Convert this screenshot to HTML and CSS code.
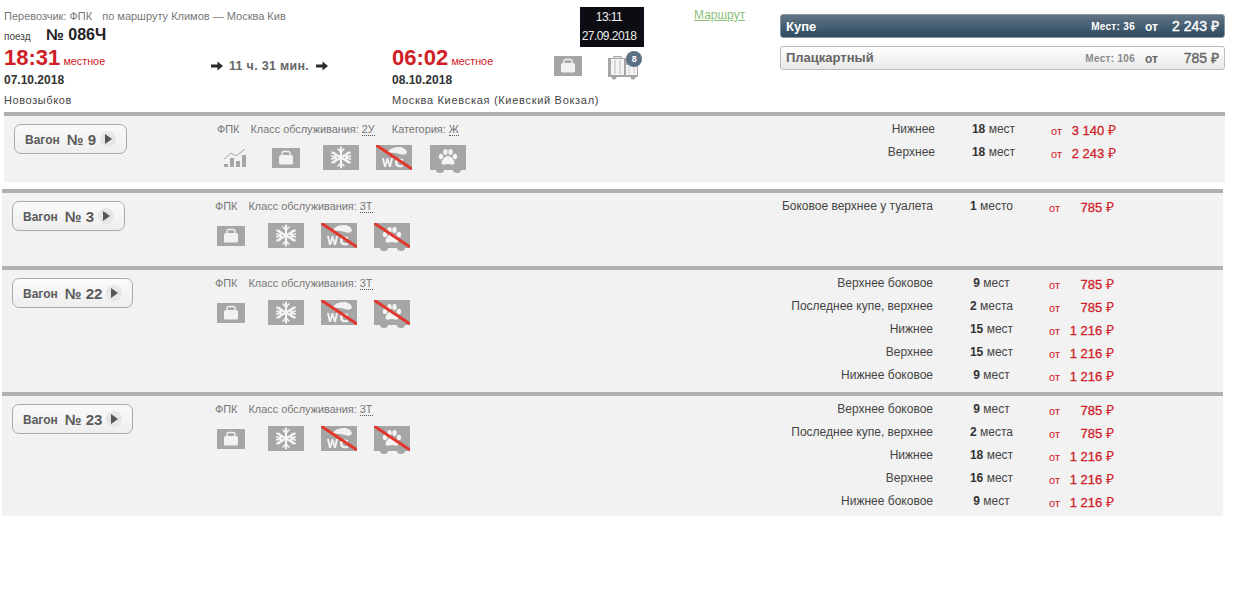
FILE: index.html
```html
<!DOCTYPE html>
<html lang="ru">
<head>
<meta charset="utf-8">
<title>Поезд № 086Ч</title>
<link rel="stylesheet" href="styles.css">
</head>
<body>
<svg class="defs" width="0" height="0" aria-hidden="true">
  <symbol id="bag" viewBox="0 0 28 20">
    <rect width="28" height="20" fill="#a6a6a6"/>
    <path d="M10 7.500V5.500Q10 3.500 12 3.500H16Q18 3.500 18 5.500V7.500" fill="none" stroke="#f2f2f2" stroke-width="1.400"/>
    <path d="M7 9Q7 7 9 7H19Q21 7 21 9V15Q21 16.500 19.500 16.500H8.500Q7 16.500 7 15Z" fill="#f2f2f2"/>
  </symbol>
  <symbol id="snow" viewBox="0 0 36 25">
    <rect width="36" height="25" fill="#a6a6a6"/>
    <g stroke="#f4f4f4" stroke-linecap="round" fill="none">
      <path d="M18 2.500V22.500M9.300 7.500L26.700 17.500M9.300 17.500L26.700 7.500" stroke-width="2.200"/>
      <path d="M15 4L18 7L21 4M15 21L18 18L21 21M8.500 11L13 12.500L11.500 7.500M27.500 14L23 12.500L24.500 17.500M8.500 14L13 12.500L11.500 17.500M27.500 11L23 12.500L24.500 7.500" stroke-width="1.600"/>
    </g>
  </symbol>
  <symbol id="wc" viewBox="0 0 36 25">
    <rect width="36" height="25" fill="#a6a6a6"/>
    <path d="M11 8Q15 1 25 2Q31 4 31 8Q28 11 24 9Q17 7 11 8Z" fill="#f2f2f2"/>
    <path d="M6 13L8 22H10L11.500 17L13 22H15L17 13H15L13.800 18.500L12.300 13H10.700L9.200 18.500L8 13ZM27 14Q19 12 19 17.500Q19 23.500 27 22V20Q21.500 21 21.500 17.500Q21.500 14.500 27 16Z" fill="#f2f2f2"/>
    <path d="M0 0L36 24" stroke="#e2372c" stroke-width="3"/>
  </symbol>
  <symbol id="pet" viewBox="0 0 36 28">
    <ellipse cx="10" cy="25" rx="4" ry="3" fill="#a6a6a6"/>
    <ellipse cx="27" cy="25" rx="4" ry="3" fill="#a6a6a6"/>
    <path d="M0 0H36V25H0Z" fill="#a6a6a6"/>
    <g fill="#f4f4f4">
      <ellipse cx="11" cy="11.500" rx="2.200" ry="2.800"/>
      <ellipse cx="15.500" cy="7" rx="2.200" ry="3"/>
      <ellipse cx="20.500" cy="7" rx="2.200" ry="3"/>
      <ellipse cx="25" cy="11.500" rx="2.200" ry="2.800"/>
      <path d="M18 11Q22 11 24.500 17Q24.500 20.500 21 19.500Q18 18.500 15 19.500Q11.500 20.500 11.500 17Q14 11 18 11Z"/>
    </g>
  </symbol>
  <symbol id="nopet" viewBox="0 0 36 28">
    <use href="#pet" width="36" height="28"/>
    <path d="M0 0L36 24" stroke="#e2372c" stroke-width="3"/>
  </symbol>
  <symbol id="chart" viewBox="0 0 22 19">
    <g fill="#a6a6a6">
      <rect x="0" y="16" width="4" height="3"/>
      <rect x="6" y="10" width="4" height="9"/>
      <rect x="12" y="13" width="4" height="6"/>
      <rect x="18" y="7" width="4" height="12"/>
    </g>
    <path d="M0 11L7 5L12 8L21 1" fill="none" stroke="#a6a6a6" stroke-width="1"/>
  </symbol>
  <symbol id="luggage" viewBox="0 0 32 24">
    <rect x="0" y="2" width="30" height="19" fill="#a6a6a6"/>
    <circle cx="6" cy="21" r="2.500" fill="#a6a6a6"/><circle cx="25" cy="21" r="2.500" fill="#a6a6a6"/>
    <path d="M6 3V0.700H13V3" fill="none" stroke="#a6a6a6" stroke-width="1.200"/>
    <rect x="3" y="3" width="13" height="16" fill="#f4f4f4"/>
    <path d="M7 4V18M12 4V18" stroke="#bbb" stroke-width="1"/>
    <rect x="18" y="9" width="11" height="10" fill="#f4f4f4"/>
    <path d="M21 10V18M26 10V18" stroke="#ccc" stroke-width="1"/>
  </symbol>
  <symbol id="arrow" viewBox="0 0 12 10">
    <path d="M0 3.500H6.500V0.500L12 5L6.500 9.500V6.500H0Z" fill="#2b2b2b"/>
  </symbol>
</svg>

<header class="head">
  <div class="top-row">
    <div class="carrier">Перевозчик: ФПК <span class="route-name">по маршруту Климов — Москва Кив</span></div>
    <div class="clock">13:11<br>27.09.2018</div>
    <a class="route-link" href="#">Маршрут</a>
  </div>
  <div class="main-row">
    <div class="trip">
      <div class="train"><span class="train-label">поезд</span><span class="train-no">№ 086Ч</span></div>
      <div class="times">
        <div class="point point-from">
          <div class="time">18:31 <span class="time-note">местное</span></div>
          <div class="date">07.10.2018</div>
          <div class="station">Новозыбков</div>
        </div>
        <div class="duration">
          <svg class="arrow"><use href="#arrow"/></svg>
          <span>11 ч. 31 мин.</span>
          <svg class="arrow"><use href="#arrow"/></svg>
        </div>
        <div class="point point-to">
          <div class="time-line">
            <div class="time">06:02 <span class="time-note">местное</span></div>
            <div class="trip-icons">
              <svg class="i-bag"><use href="#bag"/></svg>
              <span class="lug">
                <svg class="i-luggage"><use href="#luggage"/></svg>
                <span class="badge">8</span>
              </span>
            </div>
          </div>
          <div class="date">08.10.2018</div>
          <div class="station">Москва Киевская (Киевский Вокзал)</div>
        </div>
      </div>
    </div>
    <div class="classes">
      <div class="class class-on">
        <span class="class-name">Купе</span>
        <span class="class-seats">Мест: 36</span>
        <span class="class-from">от</span>
        <span class="class-price">2 243 ₽</span>
      </div>
      <div class="class">
        <span class="class-name">Плацкартный</span>
        <span class="class-seats">Мест: 106</span>
        <span class="class-from">от</span>
        <span class="class-price">785 ₽</span>
      </div>
    </div>
  </div>
</header>

<section class="car car-first">
  <div class="car-btn-col"><button class="car-btn"><span class="car-word">Вагон</span><span class="car-no">№ 9</span><span class="car-go"></span></button></div>
  <div class="car-info">
    <div class="car-meta"><span class="m-org">ФПК</span><span class="m-class">Класс обслуживания: <u>2У</u></span><span class="m-cat">Категория: <u>Ж</u></span></div>
    <div class="car-icons">
      <svg class="i-chart"><use href="#chart"/></svg>
      <svg class="i-bag"><use href="#bag"/></svg>
      <svg class="i-snow"><use href="#snow"/></svg>
      <svg class="i-wc"><use href="#wc"/></svg>
      <svg class="i-pet"><use href="#pet"/></svg>
    </div>
  </div>
  <div class="seats">
    <div class="seat"><span class="s-type">Нижнее</span><span class="s-count"><b>18</b> мест</span><span class="s-from">от</span><span class="s-price">3 140 <i>₽</i></span></div>
    <div class="seat"><span class="s-type">Верхнее</span><span class="s-count"><b>18</b> мест</span><span class="s-from">от</span><span class="s-price">2 243 <i>₽</i></span></div>
  </div>
</section>

<section class="car car-two">
  <div class="car-btn-col"><button class="car-btn"><span class="car-word">Вагон</span><span class="car-no">№ 3</span><span class="car-go"></span></button></div>
  <div class="car-info">
    <div class="car-meta"><span class="m-org">ФПК</span><span class="m-class">Класс обслуживания: <u>3Т</u></span></div>
    <div class="car-icons">
      <svg class="i-bag"><use href="#bag"/></svg>
      <svg class="i-snow"><use href="#snow"/></svg>
      <svg class="i-wc"><use href="#wc"/></svg>
      <svg class="i-pet"><use href="#nopet"/></svg>
    </div>
  </div>
  <div class="seats">
    <div class="seat"><span class="s-type">Боковое верхнее у туалета</span><span class="s-count"><b>1</b> место</span><span class="s-from">от</span><span class="s-price">785 <i>₽</i></span></div>
  </div>
</section>

<section class="car car-three">
  <div class="car-btn-col"><button class="car-btn car-btn-wide"><span class="car-word">Вагон</span><span class="car-no">№ 22</span><span class="car-go"></span></button></div>
  <div class="car-info">
    <div class="car-meta"><span class="m-org">ФПК</span><span class="m-class">Класс обслуживания: <u>3Т</u></span></div>
    <div class="car-icons">
      <svg class="i-bag"><use href="#bag"/></svg>
      <svg class="i-snow"><use href="#snow"/></svg>
      <svg class="i-wc"><use href="#wc"/></svg>
      <svg class="i-pet"><use href="#nopet"/></svg>
    </div>
  </div>
  <div class="seats">
    <div class="seat"><span class="s-type">Верхнее боковое</span><span class="s-count"><b>9</b> мест</span><span class="s-from">от</span><span class="s-price">785 <i>₽</i></span></div>
    <div class="seat"><span class="s-type">Последнее купе, верхнее</span><span class="s-count"><b>2</b> места</span><span class="s-from">от</span><span class="s-price">785 <i>₽</i></span></div>
    <div class="seat"><span class="s-type">Нижнее</span><span class="s-count"><b>15</b> мест</span><span class="s-from">от</span><span class="s-price">1 216 <i>₽</i></span></div>
    <div class="seat"><span class="s-type">Верхнее</span><span class="s-count"><b>15</b> мест</span><span class="s-from">от</span><span class="s-price">1 216 <i>₽</i></span></div>
    <div class="seat"><span class="s-type">Нижнее боковое</span><span class="s-count"><b>9</b> мест</span><span class="s-from">от</span><span class="s-price">1 216 <i>₽</i></span></div>
  </div>
</section>

<section class="car car-four">
  <div class="car-btn-col"><button class="car-btn car-btn-wide"><span class="car-word">Вагон</span><span class="car-no">№ 23</span><span class="car-go"></span></button></div>
  <div class="car-info">
    <div class="car-meta"><span class="m-org">ФПК</span><span class="m-class">Класс обслуживания: <u>3Т</u></span></div>
    <div class="car-icons">
      <svg class="i-bag"><use href="#bag"/></svg>
      <svg class="i-snow"><use href="#snow"/></svg>
      <svg class="i-wc"><use href="#wc"/></svg>
      <svg class="i-pet"><use href="#nopet"/></svg>
    </div>
  </div>
  <div class="seats">
    <div class="seat"><span class="s-type">Верхнее боковое</span><span class="s-count"><b>9</b> мест</span><span class="s-from">от</span><span class="s-price">785 <i>₽</i></span></div>
    <div class="seat"><span class="s-type">Последнее купе, верхнее</span><span class="s-count"><b>2</b> места</span><span class="s-from">от</span><span class="s-price">785 <i>₽</i></span></div>
    <div class="seat"><span class="s-type">Нижнее</span><span class="s-count"><b>18</b> мест</span><span class="s-from">от</span><span class="s-price">1 216 <i>₽</i></span></div>
    <div class="seat"><span class="s-type">Верхнее</span><span class="s-count"><b>16</b> мест</span><span class="s-from">от</span><span class="s-price">1 216 <i>₽</i></span></div>
    <div class="seat"><span class="s-type">Нижнее боковое</span><span class="s-count"><b>9</b> мест</span><span class="s-from">от</span><span class="s-price">1 216 <i>₽</i></span></div>
  </div>
</section>
</body>
</html>
```

FILE: styles.css
```css
* { box-sizing: border-box; }
html, body { margin: 0; padding: 0; background: #fff; }
body { font-family: "Liberation Sans", Arial, sans-serif; font-size: 12px; color: #444; }
.defs { position: absolute; }
svg { display: block; flex: none; }

.head { height: 112px; padding: 7px 0 0 4px; }
.top-row { display: flex; height: 17px; }
.carrier { width: 576px; padding-top: 2px; font-size: 11px; line-height: 14px; color: #777; }
.route-name { margin-left: 7px; }
.clock { flex: none; width: 64px; height: 40px; padding: 1px 6px 0 0; background: #0b0d12; color: #eee; font-size: 12px; letter-spacing: -.55px; line-height: 19px; text-align: center; position: relative; z-index: 1; }
.route-link { margin: 1px 0 0 50px; color: #8bbf77; font-size: 12px; line-height: 14px; }

.main-row { display: flex; }
.trip { width: 776px; }
.train { display: flex; align-items: baseline; height: 21px; color: #222; }
.train-label { width: 42px; font-size: 10px; color: #444; }
.train-no { font-size: 16px; font-weight: bold; line-height: 21px; }

.times { display: flex; }
.point-from { width: 207px; }
.point-to { flex: 1; }
.time { height: 25px; font-size: 22px; font-weight: bold; line-height: 25px; color: #cf2027; white-space: nowrap; }
.time-note { font-size: 10.800px; font-weight: normal; margin-left: -3px; }
.date { margin-top: 2px; font-size: 12px; font-weight: bold; line-height: 16px; color: #333; }
.station { margin-top: 4px; font-size: 11px; line-height: 16px; letter-spacing: .7px; color: #444; }
.point-from .station { letter-spacing: .6px; }

.duration { display: flex; align-items: center; width: 181px; height: 14px; margin-top: 14px; font-size: 12.500px; font-weight: bold; color: #666; letter-spacing: .3px; }
.duration span { margin: 0 7px 0 6px; white-space: nowrap; }
.arrow { width: 12px; height: 10px; }

.time-line { display: flex; height: 25px; }
.trip-icons { display: flex; align-items: flex-start; margin: 11px 0 0 61px; }
.trip-icons .i-bag { margin-right: 26px; }
.lug { position: relative; display: block; width: 32px; height: 24px; }
.i-luggage { width: 32px; height: 24px; }
.badge { position: absolute; left: 18px; top: -5px; width: 16px; height: 16px; border-radius: 50%; background: #5c7085; color: #fff; font-size: 9px; font-weight: bold; line-height: 16px; text-align: center; }

.classes { width: 445px; margin-top: -10px; }
.class { display: flex; align-items: center; height: 24px; margin-bottom: 8px; padding: 0 5px; border: 1px solid #bbb; border-radius: 3px; background: linear-gradient(#fff, #e9e9e9); color: #666; font-weight: bold; }
.class-on { background: linear-gradient(#627585, #2c4a60); border-color: #8a98a3; color: #fff; }
.class-name { flex: 1; font-size: 13px; margin-top: -2px; }
.class-on .class-name { margin-top: 0; }
.class-seats { font-size: 10px; letter-spacing: .3px; margin-top: 1px; color: #888; }
.class-on .class-seats { color: #fff; }
.class-from { width: 25px; padding-left: 10px; font-size: 12px; margin-top: 1px; }
.class-price { width: 59px; margin-top: -1px; text-align: right; font-size: 14px; font-weight: normal; -webkit-text-stroke: .4px currentColor; }

.car { display: flex; width: 1221px; margin-left: 2px; padding: 1px 0 0 10px; border-top: 4px solid #b0b0b0; background: #f2f2f2; }
.car-first { margin-left: 4px; height: 70px; margin-bottom: 7px; }
.car-two { height: 77px; }
.car-three { height: 126px; }
.car-four { height: 124px; }
.car-btn-col { width: 203px; padding-top: 7px; }
.car-btn { display: flex; align-items: center; width: 113px; height: 30px; padding: 0 0 0 10px; border: 1px solid #aaa; border-radius: 7px; background: linear-gradient(#fafafa, #eee); font-family: inherit; color: #5a5a5a; font-weight: bold; }
.car-btn-wide { width: 121px; }
.car-word { font-size: 12px; margin-top: 1px; }
.car-no { margin-left: 7px; font-size: 15px; }
.car-go { position: relative; width: 16px; height: 16px; margin-left: 4px; border-radius: 50%; background: #e6e6e6; }
.car-go::after { content: ""; position: absolute; left: 5px; top: 3px; border-left: 7px solid #555; border-top: 5px solid transparent; border-bottom: 5px solid transparent; }

.car-info { flex: none; width: 386px; }
.car-meta { display: flex; margin-top: 5px; height: 14px; font-size: 10.900px; line-height: 14px; color: #777; white-space: nowrap; }
.car-meta u { text-decoration: none; border-bottom: 1px dotted #555; }
.m-class { margin-left: 11px; }
.m-cat { margin-left: 17px; }
.car-icons { display: flex; align-items: flex-start; margin-top: 10px; }
.car-first .car-icons { margin-top: 9px; }
.i-bag { width: 28px; height: 20px; }
.i-snow, .i-wc { width: 36px; height: 25px; }
.i-pet { width: 36px; height: 28px; }
.i-chart { width: 22px; height: 19px; margin: 3px 24px 0 7px; }
.car-icons .i-bag { margin: 3px 23px 0 2px; }
.car-icons .i-snow, .car-icons .i-wc { margin-right: 17px; }
.car-first .car-icons .i-wc { margin-right: 18px; }

.seats { flex: none; width: 520px; }
.seat { display: flex; height: 23px; align-items: center; }
.s-type { flex: none; width: 332px; text-align: right; font-size: 12px; color: #444; white-space: nowrap; }
.s-count { flex: none; width: 116px; padding-left: 1px; text-align: center; font-size: 12px; color: #444; }
.s-count b { color: #333; }
.s-from { flex: none; margin-top: 4px; font-size: 11px; color: #cf2027; }
.s-price { flex: none; width: 54px; margin-top: 1px; text-align: right; font-size: 13px; color: #cf2027; -webkit-text-stroke: .3px currentColor; white-space: nowrap; }
.s-price i { font-style: normal; font-size: 14px; -webkit-text-stroke: 0; }
```
